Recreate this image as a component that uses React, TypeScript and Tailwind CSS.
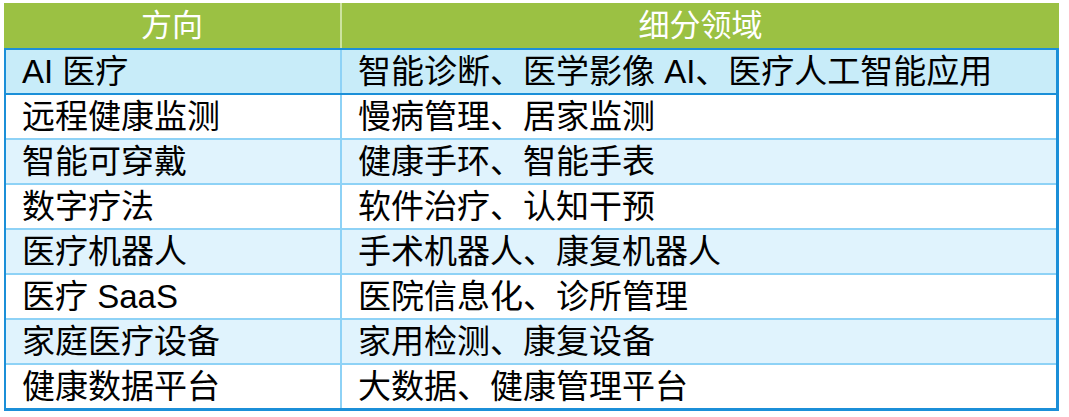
import React from "react";

const rows: { a: React.ReactNode; b: React.ReactNode; bg: string }[] = [
  { a: "AI 医疗", b: "智能诊断、医学影像 AI、医疗人工智能应用", bg: "bg-[#c8ecf9]" },
  { a: "远程健康监测", b: "慢病管理、居家监测", bg: "bg-white" },
  { a: "智能可穿戴", b: "健康手环、智能手表", bg: "bg-[#e0f3fd]" },
  { a: "数字疗法", b: "软件治疗、认知干预", bg: "bg-white" },
  { a: "医疗机器人", b: "手术机器人、康复机器人", bg: "bg-[#e0f3fd]" },
  { a: "医疗 SaaS", b: "医院信息化、诊所管理", bg: "bg-white" },
  { a: "家庭医疗设备", b: "家用检测、康复设备", bg: "bg-[#e0f3fd]" },
  { a: "健康数据平台", b: "大数据、健康管理平台", bg: "bg-white" },
];

export default function App() {
  return (
    <div
      className="w-[1069px] h-[417px] bg-white pl-[4px] pt-[3px]"
      style={{ fontFamily: '"Liberation Sans", "Noto Sans CJK SC", sans-serif' }}
    >
      <div className="w-[1055px] flex flex-col">
        <div className="flex h-[45px] bg-[#9bc143] text-white text-[31px] leading-none">
          <div className="w-[338px] flex items-center justify-center border-r-2 border-[#cde3a0]">方向</div>
          <div className="flex-1 flex items-center justify-center">细分领域</div>
        </div>
        <div className="border-l-2 border-r-[3px] border-b-[3px] border-t-2 border-[#1b8fd8] text-black text-[33px] leading-none">
          {rows.map((r, i) => (
            <div
              key={i}
              className={`flex h-[43px] ${r.bg} ${
                i === rows.length - 1
                  ? ""
                  : i === 0
                  ? "border-b-2 border-[#1b8fd8]"
                  : "border-b-2 border-[#8ed2f6]"
              } box-content`}
            >
              <div className="w-[336px] flex items-center pl-[16px] border-r-2 border-[#8ed2f6]">{r.a}</div>
              <div className="flex-1 flex items-center pl-[16px]">{r.b}</div>
            </div>
          ))}
        </div>
      </div>
    </div>
  );
}
